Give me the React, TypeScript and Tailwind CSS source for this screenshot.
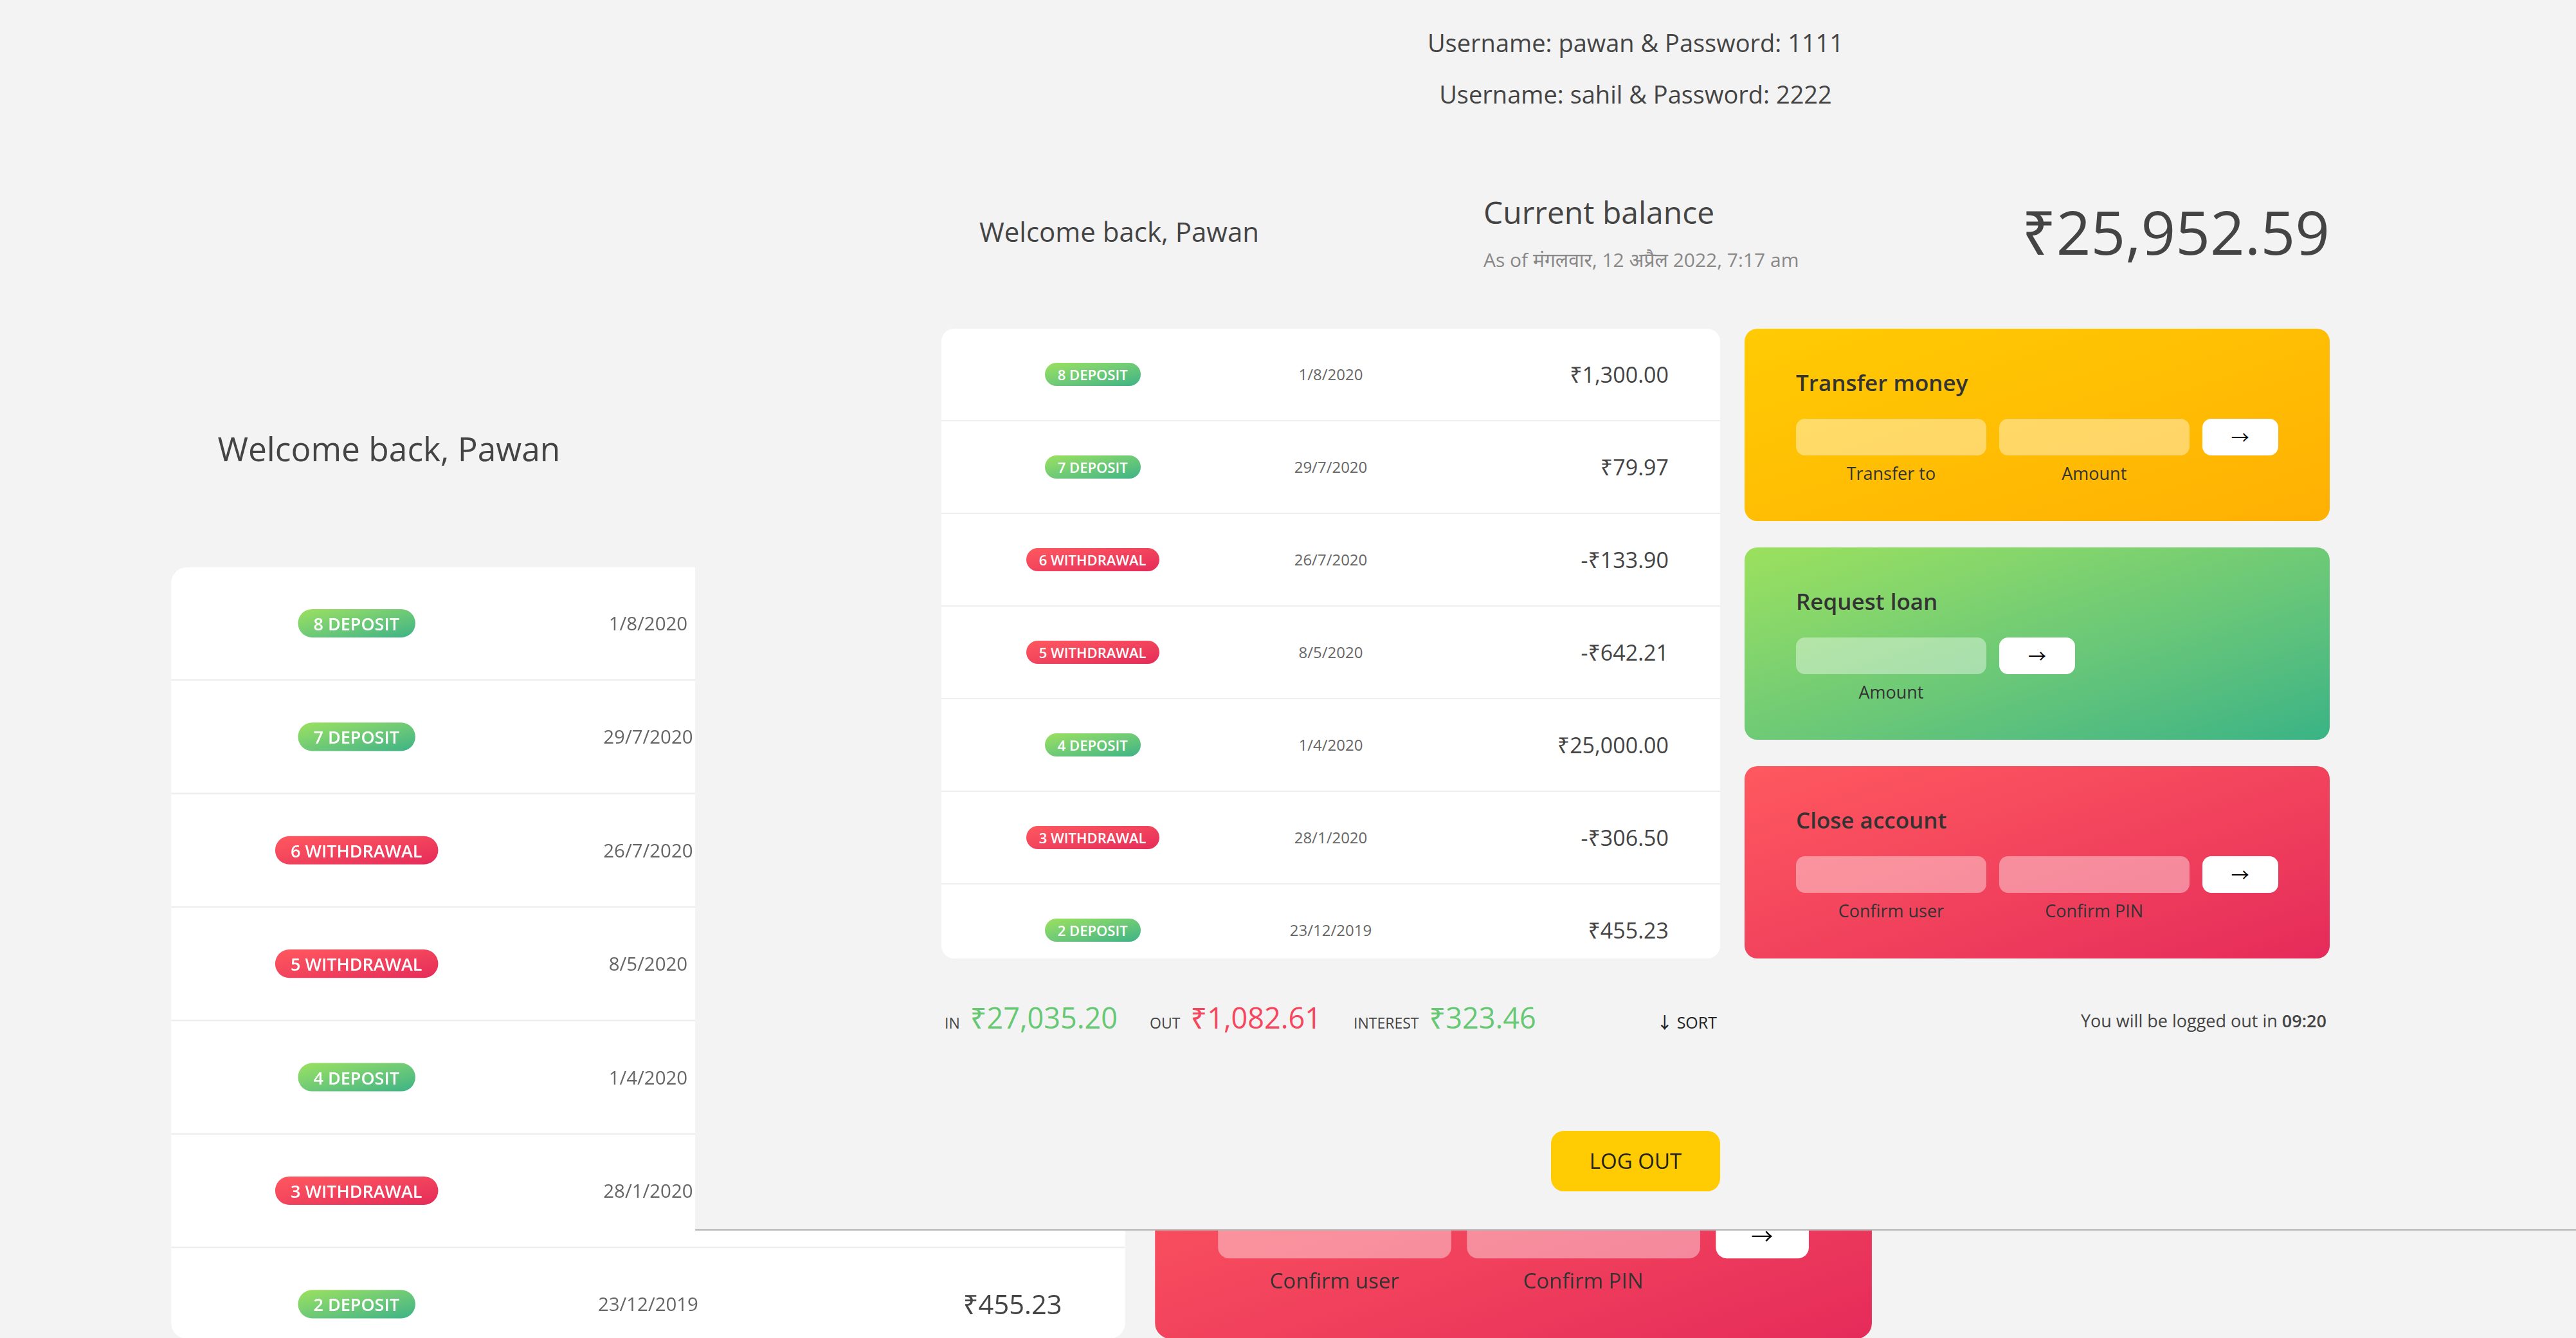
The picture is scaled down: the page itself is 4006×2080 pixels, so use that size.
type Move = { n: number; type: "deposit" | "withdrawal"; date: string; value: string };

const moves: Move[] = [
  { n: 8, type: "deposit", date: "1/8/2020", value: "₹1,300.00" },
  { n: 7, type: "deposit", date: "29/7/2020", value: "₹79.97" },
  { n: 6, type: "withdrawal", date: "26/7/2020", value: "-₹133.90" },
  { n: 5, type: "withdrawal", date: "8/5/2020", value: "-₹642.21" },
  { n: 4, type: "deposit", date: "1/4/2020", value: "₹25,000.00" },
  { n: 3, type: "withdrawal", date: "28/1/2020", value: "-₹306.50" },
  { n: 2, type: "deposit", date: "23/12/2019", value: "₹455.23" },
  { n: 1, type: "withdrawal", date: "18/11/2019", value: "-₹400.00" },
];

function MoveRow({ move }: { move: Move }) {
  const badge =
    move.type === "deposit"
      ? "bg-linear-to-tl from-[#39b385] to-[#9be15d]"
      : "bg-linear-to-tl from-[#e52a5a] to-[#ff585f]";
  return (
    <div className="grid h-[144px] shrink-0 grid-cols-3 items-center border-b-2 border-[#eee] px-[80px]">
      <span
        className={`mr-[40px] justify-self-center rounded-full px-[20px] text-[22px] font-semibold uppercase leading-[36px] text-white ${badge}`}
      >
        {move.n} {move.type}
      </span>
      <span className="justify-self-center text-[24px] font-medium text-[#666]">{move.date}</span>
      <span className="justify-self-end text-[34px]">{move.value}</span>
    </div>
  );
}

function Field({ className = "" }: { className?: string }) {
  return <input className={`h-[57px] w-full rounded-[14px] border-0 bg-white/40 outline-none ${className}`} />;
}

function Go({ className = "" }: { className?: string }) {
  return <button className={`h-[57px] rounded-[14px] bg-white text-[28px] text-black ${className}`}>→</button>;
}

function Label({ children, className = "" }: { children: React.ReactNode; className?: string }) {
  return <p className={`text-center text-[27px] leading-[40px] ${className}`}>{children}</p>;
}

function Dashboard() {
  return (
    <div className="h-[1911px] w-[2925px] text-[#444]">
      <div className="pt-[26px] text-center text-[38px] font-medium leading-[80px]">
        <p>Username: pawan &amp; Password: 1111</p>
        <p>Username: sahil &amp; Password: 2222</p>
      </div>

      <div className="mx-auto w-[2159px]">
        <header className="flex h-[325px] items-start">
          <p className="mt-[149px] w-[843px] pl-[59px] text-[42px] font-medium leading-[50px]">Welcome back, Pawan</p>
          <div className="mt-[119px]">
            <p className="text-[48px] font-medium leading-[50px]">Current balance</p>
            <p className="mt-[29px] text-[30px] leading-[40px] text-[#888]">As of मंगलवार, 12 अप्रैल 2022, 7:17 am</p>
          </div>
          <p className="ml-auto mt-[124px] text-[94px] leading-[100px]">₹25,952.59</p>
        </header>

        <div className="flex gap-[38px]">
          <div className="flex h-[979px] w-[1211px] flex-col overflow-hidden rounded-[20px] bg-white">
            {moves.map((m) => (
              <MoveRow key={m.n} move={m} />
            ))}
          </div>

          <div className="flex w-[910px] flex-col gap-[41px] text-[#333]">
            <div className="h-[299px] rounded-[20px] bg-linear-to-tl from-[#ffb003] to-[#ffcb03] px-[80px] pt-[60px]">
              <h2 className="text-[35px] font-semibold leading-[48px]">Transfer money</h2>
              <div className="mt-[32px] grid grid-cols-[2.5fr_2.5fr_1fr] gap-x-[20px] gap-y-[8px]">
                <Field />
                <Field />
                <Go />
                <Label>Transfer to</Label>
                <Label>Amount</Label>
              </div>
            </div>

            <div className="h-[299px] rounded-[20px] bg-linear-to-tl from-[#39b385] to-[#9be15d] px-[80px] pt-[60px]">
              <h2 className="text-[35px] font-semibold leading-[48px]">Request loan</h2>
              <div className="mt-[32px] grid grid-cols-[2.5fr_1fr_2.5fr] gap-x-[20px] gap-y-[8px]">
                <Field />
                <Go />
                <Label className="col-start-1 row-start-2">Amount</Label>
              </div>
            </div>

            <div className="h-[299px] rounded-[20px] bg-linear-to-tl from-[#e52a5a] to-[#ff585f] px-[80px] pt-[60px]">
              <h2 className="text-[35px] font-semibold leading-[48px]">Close account</h2>
              <div className="mt-[32px] grid grid-cols-[2.5fr_2.5fr_1fr] gap-x-[20px] gap-y-[8px]">
                <Field />
                <Field />
                <Go />
                <Label>Confirm user</Label>
                <Label>Confirm PIN</Label>
              </div>
            </div>
          </div>
        </div>

        <div className="mt-[62px] flex h-[60px] items-center gap-[38px]">
          <div className="flex w-[1211px] items-baseline px-[5px]">
            <span className="mr-[16px] text-[23px] font-medium uppercase">In</span>
            <span className="mr-[50px] text-[45px] leading-[60px] text-[#66c873]">₹27,035.20</span>
            <span className="mr-[16px] text-[23px] font-medium uppercase">Out</span>
            <span className="mr-[50px] text-[45px] leading-[60px] text-[#f5465d]">₹1,082.61</span>
            <span className="mr-[16px] text-[23px] font-medium uppercase">Interest</span>
            <span className="text-[45px] leading-[60px] text-[#66c873]">₹323.46</span>
            <button className="ml-auto text-[25px] font-medium text-[#222]">↓ SORT</button>
          </div>
          <p className="w-[910px] pr-[5px] pt-[10px] text-right text-[27px]">
            You will be logged out in <span className="font-semibold">09:20</span>
          </p>
        </div>
      </div>

      <div className="mt-[146px] flex justify-center">
        <button className="h-[94px] w-[263px] rounded-[20px] bg-[#ffcb03] text-[33px] text-[#222]">LOG OUT</button>
      </div>
    </div>
  );
}

export default function App() {
  return (
    <div className="relative h-[2080px] w-full overflow-hidden bg-[#f3f3f3] font-['Open_Sans','Noto_Sans','Noto_Sans_CJK_SC',sans-serif]">
      <div className="ml-[-203px] mt-[256px] w-[2925px] origin-top-left scale-[1.225]">
        <Dashboard />
      </div>
      <div className="absolute left-[1081px] top-0 h-[1913px] w-[2925px] border-b-2 border-[#b4b4b4] bg-[#f3f3f3]">
        <Dashboard />
      </div>
    </div>
  );
}
